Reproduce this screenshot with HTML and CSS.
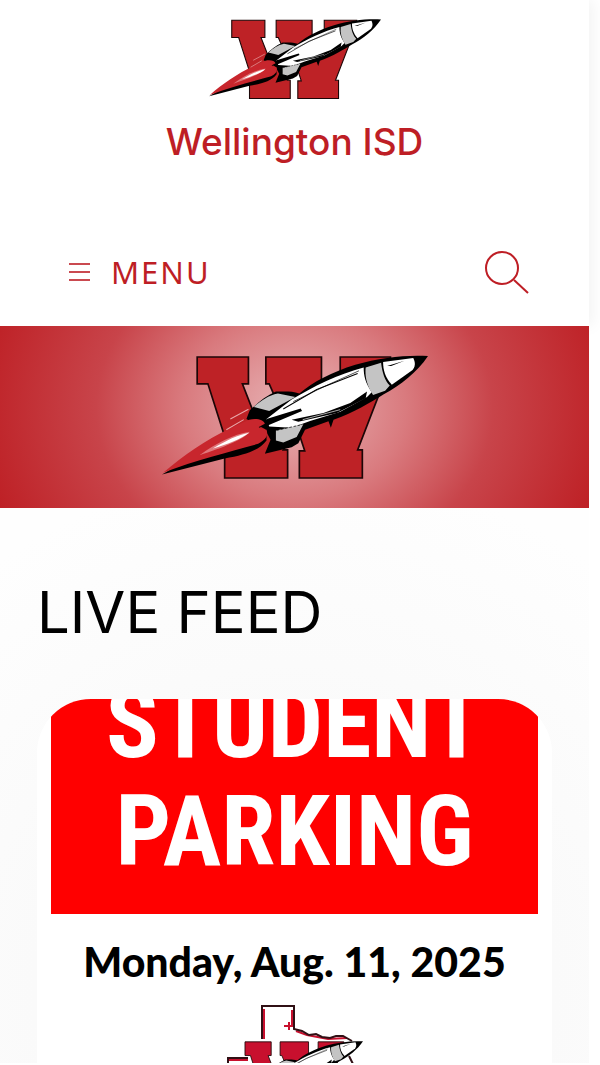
FILE: index.html
```html
<!DOCTYPE html>
<html lang="en">
<head>
    <meta charset="UTF-8">
    <meta name="viewport" content="width=device-width, initial-scale=1.0">
    <title>Wellington ISD</title>
    <link rel="stylesheet" href="styles.css">
</head>
<body>
    <!-- shared rocket logo -->
    <svg class="sprite" aria-hidden="true">
        <symbol id="rocket" viewBox="38 44 794 376">
            <path class="letter" d="M143 53H296V133H278L310 215 330 260 372 165 358 133H348V53H514V133H500L545 230 600 133H570V53H720V133H698L622 330H636V414H448V333H464L440 260 400 330H413V414H225V290L175 133H143Z"/>
            <path fill="#000" d="M832 50C770 46 690 54 615 76 545 98 490 126 448 162 425 154 405 156 378 156 345 170 322 192 300 212L290 238 345 268 362 300 345 342 425 322 445 310 465 270 535 245 542 264 550 240C610 220 660 188 700 164 750 138 800 98 832 50Z"/>
            <path fill="#fff" d="M640 84C565 104 490 140 425 180L350 238 358 260 425 264 480 244 570 216 650 172 664 158C645 130 640 108 640 84Z"/>
            <path fill="#c4c4c4" d="M384 162 436 172 358 214 312 202C335 182 355 168 384 162ZM378 272 460 254 440 292 400 308 378 302ZM646 84 692 70C695 98 704 126 718 138L704 154 668 166C650 140 643 112 646 84Z"/>
            <path fill="#fff" d="M698 68 788 56C796 72 793 82 786 92L724 136C704 114 698 92 698 68Z"/>
            <path fill="#000" d="M425 240 520 220 600 190 650 156 646 176 560 220 445 246ZM350 238 452 207 456 214 350 259ZM710 80 762 64 722 80Z"/>
            <path fill="none" stroke="#fff" stroke-width="2" d="M458 240 570 210"/>
            <path fill="none" stroke="#000" stroke-width="3" d="M400 208 500 150 622 102"/>
            <path fill="none" stroke="#000" stroke-width="2" stroke-dasharray="8 5" d="M380 272 450 256"/>
            <path fill="none" stroke="#000" stroke-width="2" d="M430 186 520 142 626 94"/>
            <path fill="#000" d="M38 404 215 300 350 270 350 302C325 334 285 345 225 356Z"/>
            <path fill="#c8262d" d="M42 398C100 348 170 300 240 266L298 240C320 234 342 240 345 252L324 263 350 270C356 288 348 300 325 312 245 335 140 360 42 398Z"/>
            <path fill="#e0777b" d="M150 346C200 310 250 284 300 276 285 298 215 325 150 346Z"/>
            <path fill="#fff" d="M190 326C230 302 265 285 298 279 275 298 230 314 190 326Z"/>
            <path fill="none" stroke="#e9a8aa" stroke-width="3" d="M242 238 296 209M230 270 282 240"/>
        </symbol>
    </svg>

    <div class="page">
        <header class="site-header">
            <a class="brand" href="#">
                <svg class="brand-logo" aria-hidden="true"><use href="#rocket"/></svg>
                <span class="brand-name">Wellington ISD</span>
            </a>
            <nav class="toolbar">
                <button class="menu-button" type="button">
                    <svg width="22" height="20" viewBox="0 0 22 20" aria-hidden="true"><path d="M0 2H21M0 10H21M0 18H21"/></svg>
                    <span>MENU</span>
                </button>
                <button class="search-button" type="button" aria-label="Search">
                    <svg width="46" height="44" viewBox="0 0 46 44" aria-hidden="true"><circle cx="19" cy="18" r="16"/><path d="M31 30 45 43"/></svg>
                </button>
            </nav>
        </header>

        <section class="banner">
            <svg class="banner-logo" role="img" aria-label="Wellington Rockets"><use href="#rocket"/></svg>
        </section>

        <main class="feed">
            <h1>LIVE FEED</h1>
            <article class="card">
                <div class="poster">
                    <h2>STUDENT<br>PARKING</h2>
                    <p>Monday, Aug. 11, 2025</p>
                    <svg class="texas" viewBox="0 0 170 80" aria-hidden="true">
                        <path class="outline-red" d="M54 39V9M82 10V26M74 26H83M79 22V30M18 60H38M86 31 97 35 118 39 137 38"/>
                        <path class="outline" d="M18 75V58H38M52 39V6H84V29L92 31 99 35 106 34 112 37 120 38 126 36 133 36 142 41M139 56 148 74"/>
                        <svg x="17" y="40" width="136" height="65"><use href="#rocket"/></svg>
                    </svg>
                </div>
            </article>
        </main>
    </div>
</body>
</html>
```
FILE: styles.css
```css
:root {
    --primary-color: #be1e25;
    --letter-color: #be2226;
}

* {
    box-sizing: border-box;
    margin: 0;
    padding: 0;
}

body {
    background: #fff;
    color: #000;
    font-family: Inter, sans-serif;
}

.sprite {
    position: absolute;
    width: 0;
    height: 0;
}

.letter {
    fill: var(--letter-color);
    stroke: #1c0607;
    stroke-width: 5px;
}

.page {
    height: 100vh;
    padding-right: 11px;
    border-bottom: 2px solid #fff;
    overflow: hidden;
}

.site-header {
    padding: 18px 60px 28px;
    background: #fff;
    box-shadow: 4px 0 14px rgba(0, 0, 0, 0.05);
}

.brand {
    display: flex;
    flex-direction: column;
    align-items: center;
    gap: 20px;
    color: var(--primary-color);
    text-decoration: none;
}

.brand-logo {
    width: 172px;
    height: 82px;
}

.brand-name {
    font-size: 37px;
    font-weight: 500;
    line-height: 44px;
}

.toolbar {
    display: flex;
    justify-content: space-between;
    align-items: center;
    margin-top: 82px;
}

.toolbar button {
    border: 0;
    background: none;
    color: var(--primary-color);
    cursor: pointer;
}

.toolbar svg {
    fill: none;
    stroke: currentColor;
    stroke-width: 2px;
}

.menu-button {
    display: flex;
    align-items: center;
    gap: 20px;
    padding-left: 9px;
    font-family: "Noto Sans", sans-serif;
    font-size: 31px;
    line-height: 44px;
    letter-spacing: 2px;
}

.toolbar .menu-button svg {
    opacity: 0.8;
}

.search-button {
    display: flex;
    height: 52px;
    align-items: center;
}

.banner {
    display: flex;
    justify-content: center;
    padding: 28px 0;
    background: radial-gradient(ellipse 320px 260px at 50% 45%, #e8b4b6 0%, #d97a7e 35%, #c8444a 62%, #be2025 100%);
}

.banner-logo {
    width: 266px;
    height: 126px;
}

.feed {
    min-height: 100%;
    padding: 68px 37px 0;
    background: radial-gradient(circle at 50% 480px, #f7f7f7 0%, #fafafa 260px, #fefefe 520px);
}

.feed h1 {
    font-size: 58px;
    font-weight: 400;
    line-height: 72px;
}

.card {
    margin-top: 51px;
    padding: 0 14px;
    border-radius: 54px 54px 0 0;
    background: #fff;
    overflow: hidden;
}

.poster {
    text-align: center;
}

.poster h2 {
    height: 215px;
    padding-bottom: 28px;
    display: flex;
    flex-direction: column;
    justify-content: flex-end;
    background: #f00;
    color: #fff;
    font-family: "Roboto Condensed", "Liberation Sans Narrow", "Liberation Sans", sans-serif;
    font-size: 98px;
    font-weight: 700;
    line-height: 108px;
}

.poster p {
    margin-top: 24px;
    font-family: Lato, sans-serif;
    font-size: 41px;
    font-weight: 900;
    line-height: 48px;
}

.texas {
    --letter-color: #c8102e;
    display: block;
    width: 170px;
    margin: 14px auto 0;
}

.outline {
    fill: none;
    stroke: #301015;
    stroke-width: 2px;
}

.outline-red {
    fill: none;
    stroke: #c8102e;
    stroke-width: 2px;
}
```
